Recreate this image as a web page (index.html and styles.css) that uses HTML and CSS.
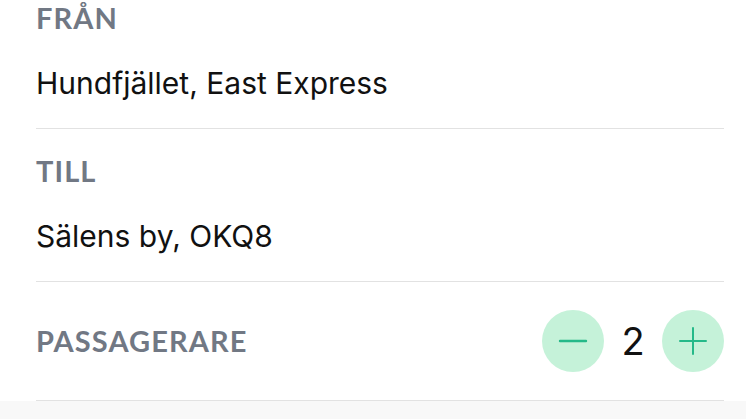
FILE: index.html
```html
<!DOCTYPE html>
<html lang="sv">
<head>
    <meta charset="UTF-8">
    <meta name="viewport" content="width=device-width, initial-scale=1.0">
    <title>Resa</title>
    <link rel="stylesheet" href="styles.css">
</head>
<body>
    <div class="trip-form">
        <div class="field field-first">
            <div class="field-label">FRÅN</div>
            <div class="field-value">Hundfjället, East Express</div>
        </div>
        <div class="field">
            <div class="field-label">TILL</div>
            <div class="field-value">Sälens by, OKQ8</div>
        </div>
        <div class="field field-row">
            <div class="field-label">PASSAGERARE</div>
            <div class="stepper">
                <button type="button" class="step-btn" aria-label="Minska">
                    <svg width="30" height="30" viewBox="0 0 30 30"><path d="M2 15h26" stroke="#25b989" stroke-width="2.4" stroke-linecap="round"/></svg>
                </button>
                <span class="step-count">2</span>
                <button type="button" class="step-btn" aria-label="Öka">
                    <svg width="30" height="30" viewBox="0 0 30 30"><path d="M2 15h26M15 2v26" stroke="#25b989" stroke-width="2" stroke-linecap="round"/></svg>
                </button>
            </div>
        </div>
    </div>
</body>
</html>
```

FILE: styles.css
```css
body {
    margin: 0;
    background-color: #f8f8f8;
    font-family: Inter, "Noto Sans", sans-serif;
}
.trip-form {
    background-color: white;
    padding: 0 22px 0 36px;
}
.field {
    border-bottom: 1px solid #e2e2e2;
    padding: 25px 0 26px;
}
.field-first {
    padding-top: 1px;
}
.field-label {
    font-family: Lato, "Noto Sans", sans-serif;
    font-weight: bold;
    font-size: 29px;
    line-height: 34px;
    letter-spacing: 1.1px;
    color: #717884;
}
.field-value {
    margin-top: 29px;
    font-size: 30px;
    line-height: 38px;
    color: #111;
}
.field-row {
    display: flex;
    align-items: center;
    justify-content: space-between;
    height: 118px;
    padding: 0;
}
.stepper {
    display: flex;
    align-items: center;
}
.step-btn {
    width: 62px;
    height: 62px;
    border-radius: 50%;
    border: none;
    padding: 0;
    background-color: #c5f2d9;
    display: flex;
    align-items: center;
    justify-content: center;
    cursor: pointer;
}
.step-count {
    width: 58px;
    text-align: center;
    font-size: 38px;
    color: #111;
}
```
